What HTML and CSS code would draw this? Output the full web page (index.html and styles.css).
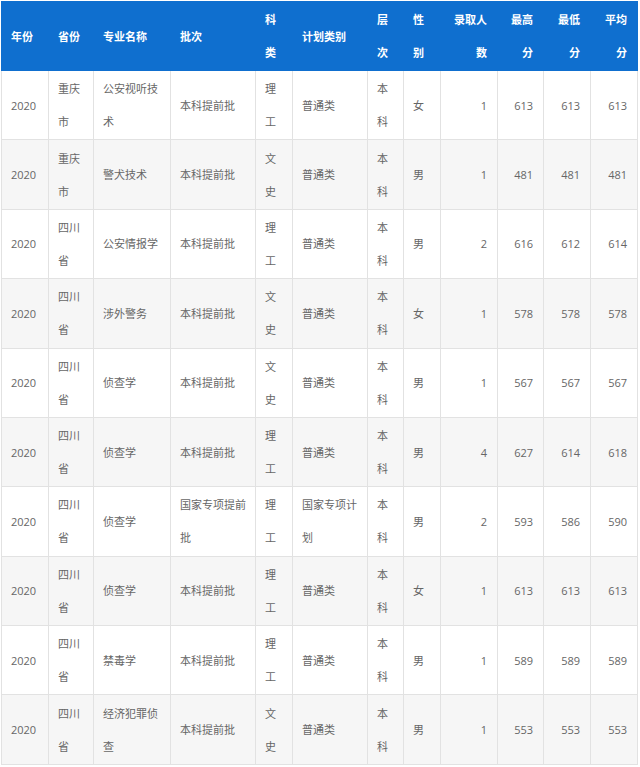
FILE: index.html
```
<!DOCTYPE html>
<html lang="zh-CN">
<head>
<meta charset="utf-8">
<title>录取分数</title>
<link rel="stylesheet" href="styles.css">
</head>
<body>
<table class="score-table">
  <colgroup>
    <col class="c-year"><col class="c-prov"><col class="c-major"><col class="c-batch"><col class="c-subj"><col class="c-plan"><col class="c-level"><col class="c-sex"><col class="c-num"><col class="c-max"><col class="c-min"><col class="c-avg">
  </colgroup>
  <thead>
    <tr>
      <th>年份</th><th>省份</th><th>专业名称</th><th>批次</th><th>科类</th><th>计划类别</th><th>层次</th><th>性别</th><th class="r">录取人数</th><th class="r">最高分</th><th class="r">最低分</th><th class="r">平均分</th>
    </tr>
  </thead>
  <tbody>
    <tr><td>2020</td><td>重庆市</td><td>公安视听技术</td><td>本科提前批</td><td>理工</td><td>普通类</td><td>本科</td><td>女</td><td class="r">1</td><td class="r">613</td><td class="r">613</td><td class="r">613</td></tr>
    <tr><td>2020</td><td>重庆市</td><td>警犬技术</td><td>本科提前批</td><td>文史</td><td>普通类</td><td>本科</td><td>男</td><td class="r">1</td><td class="r">481</td><td class="r">481</td><td class="r">481</td></tr>
    <tr><td>2020</td><td>四川省</td><td>公安情报学</td><td>本科提前批</td><td>理工</td><td>普通类</td><td>本科</td><td>男</td><td class="r">2</td><td class="r">616</td><td class="r">612</td><td class="r">614</td></tr>
    <tr><td>2020</td><td>四川省</td><td>涉外警务</td><td>本科提前批</td><td>文史</td><td>普通类</td><td>本科</td><td>女</td><td class="r">1</td><td class="r">578</td><td class="r">578</td><td class="r">578</td></tr>
    <tr><td>2020</td><td>四川省</td><td>侦查学</td><td>本科提前批</td><td>文史</td><td>普通类</td><td>本科</td><td>男</td><td class="r">1</td><td class="r">567</td><td class="r">567</td><td class="r">567</td></tr>
    <tr><td>2020</td><td>四川省</td><td>侦查学</td><td>本科提前批</td><td>理工</td><td>普通类</td><td>本科</td><td>男</td><td class="r">4</td><td class="r">627</td><td class="r">614</td><td class="r">618</td></tr>
    <tr><td>2020</td><td>四川省</td><td>侦查学</td><td>国家专项提前批</td><td>理工</td><td>国家专项计划</td><td>本科</td><td>男</td><td class="r">2</td><td class="r">593</td><td class="r">586</td><td class="r">590</td></tr>
    <tr><td>2020</td><td>四川省</td><td>侦查学</td><td>本科提前批</td><td>理工</td><td>普通类</td><td>本科</td><td>女</td><td class="r">1</td><td class="r">613</td><td class="r">613</td><td class="r">613</td></tr>
    <tr><td>2020</td><td>四川省</td><td>禁毒学</td><td>本科提前批</td><td>理工</td><td>普通类</td><td>本科</td><td>男</td><td class="r">1</td><td class="r">589</td><td class="r">589</td><td class="r">589</td></tr>
    <tr><td>2020</td><td>四川省</td><td>经济犯罪侦查</td><td>本科提前批</td><td>文史</td><td>普通类</td><td>本科</td><td>男</td><td class="r">1</td><td class="r">553</td><td class="r">553</td><td class="r">553</td></tr>
  </tbody>
</table>
</body>
</html>
```
FILE: styles.css
```
html, body {
  margin: 0;
  padding: 0;
  background: #fff;
}
body {
  padding: 1px 0 0 1px;
  font-family: "Open Sans", "Noto Sans CJK SC", "Microsoft YaHei", sans-serif;
}
.score-table {
  border-collapse: collapse;
  table-layout: fixed;
  width: 636px;
  font-size: 11px;
  line-height: 33px;
  color: #666;
}
.c-year { width: 47px; }
.c-prov { width: 45px; }
.c-major { width: 77px; }
.c-batch { width: 85px; }
.c-subj { width: 37px; }
.c-plan { width: 75px; }
.c-level { width: 36px; }
.c-sex { width: 37px; }
.c-num { width: 57px; }
.c-max { width: 46px; }
.c-min { width: 47px; }
.c-avg { width: 47px; }

.score-table th {
  background: #0f6fcf;
  color: #fff;
  font-weight: bold;
  text-align: left;
  vertical-align: middle;
  padding: 1px 8px 1px 9px;
  height: 66px;
  border: 1px solid #0f6fcf;
  word-break: break-all;
}
.score-table td {
  text-align: left;
  vertical-align: middle;
  padding: 1.2px 8px 1.2px 9px;
  border: 1px solid #e2e2e2;
  word-break: break-all;
}
.score-table tbody tr:nth-child(even) td {
  background: #f6f6f6;
}
.score-table .r {
  text-align: right;
  padding-right: 10px;
  padding-left: 4px;
}
```
